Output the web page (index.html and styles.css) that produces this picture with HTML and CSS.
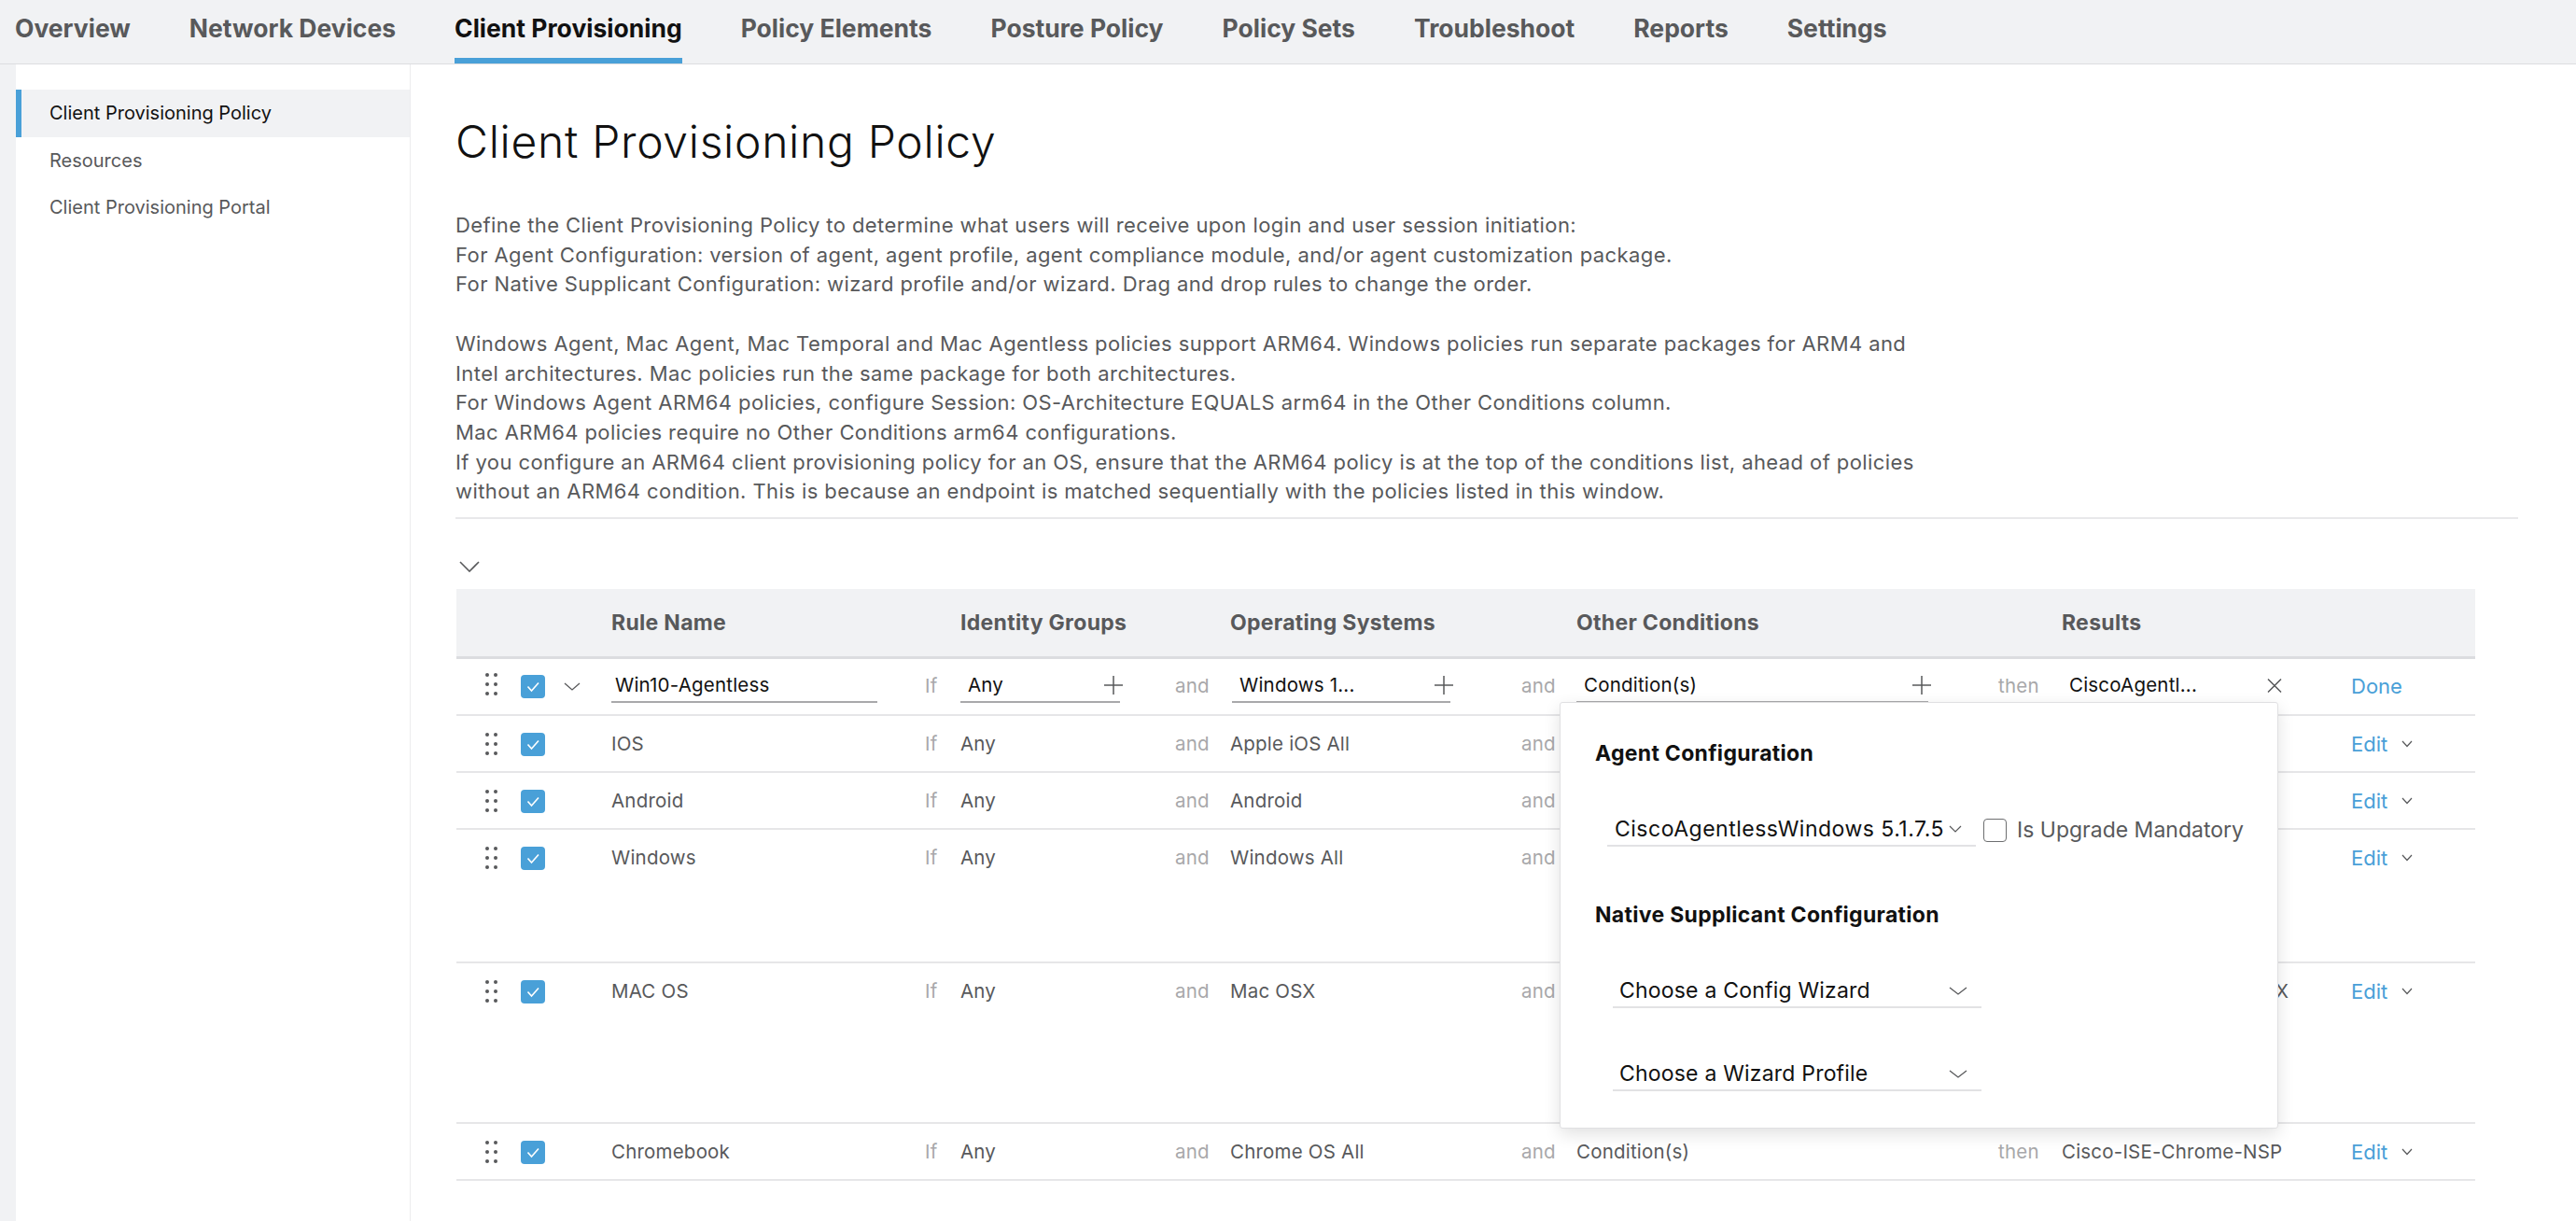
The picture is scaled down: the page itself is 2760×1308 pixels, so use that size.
FILE: index.html
```html
<!DOCTYPE html>
<html lang="en">
<head>
<meta charset="utf-8">
<title>Client Provisioning Policy</title>
<link rel="stylesheet" href="styles.css">
</head>
<body>
<nav class="tabs">
  <a class="tab">Overview</a>
  <a class="tab">Network Devices</a>
  <a class="tab active">Client Provisioning</a>
  <a class="tab">Policy Elements</a>
  <a class="tab">Posture Policy</a>
  <a class="tab">Policy Sets</a>
  <a class="tab">Troubleshoot</a>
  <a class="tab">Reports</a>
  <a class="tab">Settings</a>
</nav>
<div class="page">
  <aside class="sidebar">
    <a class="side-item active">Client Provisioning Policy</a>
    <a class="side-item">Resources</a>
    <a class="side-item">Client Provisioning Portal</a>
  </aside>
  <main class="main">
    <h1 class="title">Client Provisioning Policy</h1>
    <div class="desc">
      <p>Define the Client Provisioning Policy to determine what users will receive upon login and user session initiation:<br>
      For Agent Configuration: version of agent, agent profile, agent compliance module, and/or agent customization package.<br>
      For Native Supplicant Configuration: wizard profile and/or wizard. Drag and drop rules to change the order.</p>
      <p>Windows Agent, Mac Agent, Mac Temporal and Mac Agentless policies support ARM64. Windows policies run separate packages for ARM4 and<br>
      Intel architectures. Mac policies run the same package for both architectures.<br>
      For Windows Agent ARM64 policies, configure Session: OS-Architecture EQUALS arm64 in the Other Conditions column.<br>
      Mac ARM64 policies require no Other Conditions arm64 configurations.<br>
      If you configure an ARM64 client provisioning policy for an OS, ensure that the ARM64 policy is at the top of the conditions list, ahead of policies<br>
      without an ARM64 condition. This is because an endpoint is matched sequentially with the policies listed in this window.</p>
    </div>
    <div class="sep"></div>
    <div class="collapse"><svg width="22" height="12" viewBox="0 0 22 12"><path d="M1 1l10 10 10-10" fill="none" stroke="#58595b" stroke-width="1.6"/></svg></div>

    <div class="table">
      <div class="grid thead">
        <span></span><span></span><span></span>
        <span>Rule Name</span><span></span>
        <span>Identity Groups</span><span></span>
        <span>Operating Systems</span><span></span>
        <span>Other Conditions</span><span></span>
        <span>Results</span><span></span>
      </div>

      <div class="grid row row-edit">
        <span class="drag"><svg width="13" height="24" viewBox="0 0 13 24"><circle cx="2" cy="2" r="2"/><circle cx="11" cy="2" r="2"/><circle cx="2" cy="12" r="2"/><circle cx="11" cy="12" r="2"/><circle cx="2" cy="22" r="2"/><circle cx="11" cy="22" r="2"/></svg></span>
        <span class="cb"><svg width="26" height="25" viewBox="0 0 26 25"><path d="M7.5 12.5l4 4.5 7.5-8.5" fill="none" stroke="#fff" stroke-width="1.6"/></svg></span>
        <span class="expand"><svg width="18" height="9" viewBox="0 0 18 9"><path d="M1 1l8 7 8-7" fill="none" stroke="#58595b" stroke-width="1.3"/></svg></span>
        <span class="input in-name">Win10-Agentless</span>
        <span class="kw">If</span>
        <span class="input in-id">Any<svg class="plus" width="20" height="20" viewBox="0 0 20 20"><path d="M10 0v20M0 10h20" stroke="#58595b" stroke-width="1.5"/></svg></span>
        <span class="kw">and</span>
        <span class="input in-os">Windows 1...<svg class="plus" width="20" height="20" viewBox="0 0 20 20"><path d="M10 0v20M0 10h20" stroke="#58595b" stroke-width="1.5"/></svg></span>
        <span class="kw">and</span>
        <span class="input in-cond">Condition(s)<svg class="plus" width="20" height="20" viewBox="0 0 20 20"><path d="M10 0v20M0 10h20" stroke="#58595b" stroke-width="1.5"/></svg></span>
        <span class="kw">then</span>
        <span class="input in-res">CiscoAgentl...<svg class="x" width="16" height="15" viewBox="0 0 16 15"><path d="M1 0.5l14 14M15 0.5L1 14.5" stroke="#58595b" stroke-width="1.5"/></svg></span>
        <span class="action">Done</span>
      </div>

      <div class="grid row">
        <span class="drag"><svg width="13" height="24" viewBox="0 0 13 24"><circle cx="2" cy="2" r="2"/><circle cx="11" cy="2" r="2"/><circle cx="2" cy="12" r="2"/><circle cx="11" cy="12" r="2"/><circle cx="2" cy="22" r="2"/><circle cx="11" cy="22" r="2"/></svg></span>
        <span class="cb"><svg width="26" height="25" viewBox="0 0 26 25"><path d="M7.5 12.5l4 4.5 7.5-8.5" fill="none" stroke="#fff" stroke-width="1.6"/></svg></span>
        <span></span>
        <span class="txt">IOS</span>
        <span class="kw">If</span>
        <span class="txt">Any</span>
        <span class="kw">and</span>
        <span class="txt">Apple iOS All</span>
        <span class="kw">and</span>
        <span></span>
        <span></span>
        <span></span>
        <span class="action">Edit<svg class="chev" width="12" height="8" viewBox="0 0 12 8"><path d="M1 1l5 5.5 5-5.5" fill="none" stroke="#58595b" stroke-width="1.2"/></svg></span>
      </div>

      <div class="grid row">
        <span class="drag"><svg width="13" height="24" viewBox="0 0 13 24"><circle cx="2" cy="2" r="2"/><circle cx="11" cy="2" r="2"/><circle cx="2" cy="12" r="2"/><circle cx="11" cy="12" r="2"/><circle cx="2" cy="22" r="2"/><circle cx="11" cy="22" r="2"/></svg></span>
        <span class="cb"><svg width="26" height="25" viewBox="0 0 26 25"><path d="M7.5 12.5l4 4.5 7.5-8.5" fill="none" stroke="#fff" stroke-width="1.6"/></svg></span>
        <span></span>
        <span class="txt">Android</span>
        <span class="kw">If</span>
        <span class="txt">Any</span>
        <span class="kw">and</span>
        <span class="txt">Android</span>
        <span class="kw">and</span>
        <span></span>
        <span></span>
        <span></span>
        <span class="action">Edit<svg class="chev" width="12" height="8" viewBox="0 0 12 8"><path d="M1 1l5 5.5 5-5.5" fill="none" stroke="#58595b" stroke-width="1.2"/></svg></span>
      </div>

      <div class="grid row row-win">
        <span class="drag"><svg width="13" height="24" viewBox="0 0 13 24"><circle cx="2" cy="2" r="2"/><circle cx="11" cy="2" r="2"/><circle cx="2" cy="12" r="2"/><circle cx="11" cy="12" r="2"/><circle cx="2" cy="22" r="2"/><circle cx="11" cy="22" r="2"/></svg></span>
        <span class="cb"><svg width="26" height="25" viewBox="0 0 26 25"><path d="M7.5 12.5l4 4.5 7.5-8.5" fill="none" stroke="#fff" stroke-width="1.6"/></svg></span>
        <span></span>
        <span class="txt">Windows</span>
        <span class="kw">If</span>
        <span class="txt">Any</span>
        <span class="kw">and</span>
        <span class="txt">Windows All</span>
        <span class="kw">and</span>
        <span></span>
        <span></span>
        <span></span>
        <span class="action">Edit<svg class="chev" width="12" height="8" viewBox="0 0 12 8"><path d="M1 1l5 5.5 5-5.5" fill="none" stroke="#58595b" stroke-width="1.2"/></svg></span>
      </div>

      <div class="grid row row-mac">
        <span class="drag"><svg width="13" height="24" viewBox="0 0 13 24"><circle cx="2" cy="2" r="2"/><circle cx="11" cy="2" r="2"/><circle cx="2" cy="12" r="2"/><circle cx="11" cy="12" r="2"/><circle cx="2" cy="22" r="2"/><circle cx="11" cy="22" r="2"/></svg></span>
        <span class="cb"><svg width="26" height="25" viewBox="0 0 26 25"><path d="M7.5 12.5l4 4.5 7.5-8.5" fill="none" stroke="#fff" stroke-width="1.6"/></svg></span>
        <span></span>
        <span class="txt">MAC OS</span>
        <span class="kw">If</span>
        <span class="txt">Any</span>
        <span class="kw">and</span>
        <span class="txt">Mac OSX</span>
        <span class="kw">and</span>
        <span></span>
        <span></span>
        <span class="txt">Cisco-ISE-NSP-MacOSX</span>
        <span class="action">Edit<svg class="chev" width="12" height="8" viewBox="0 0 12 8"><path d="M1 1l5 5.5 5-5.5" fill="none" stroke="#58595b" stroke-width="1.2"/></svg></span>
      </div>

      <div class="grid row">
        <span class="drag"><svg width="13" height="24" viewBox="0 0 13 24"><circle cx="2" cy="2" r="2"/><circle cx="11" cy="2" r="2"/><circle cx="2" cy="12" r="2"/><circle cx="11" cy="12" r="2"/><circle cx="2" cy="22" r="2"/><circle cx="11" cy="22" r="2"/></svg></span>
        <span class="cb"><svg width="26" height="25" viewBox="0 0 26 25"><path d="M7.5 12.5l4 4.5 7.5-8.5" fill="none" stroke="#fff" stroke-width="1.6"/></svg></span>
        <span></span>
        <span class="txt">Chromebook</span>
        <span class="kw">If</span>
        <span class="txt">Any</span>
        <span class="kw">and</span>
        <span class="txt">Chrome OS All</span>
        <span class="kw">and</span>
        <span class="txt">Condition(s)</span>
        <span class="kw">then</span>
        <span class="txt">Cisco-ISE-Chrome-NSP</span>
        <span class="action">Edit<svg class="chev" width="12" height="8" viewBox="0 0 12 8"><path d="M1 1l5 5.5 5-5.5" fill="none" stroke="#58595b" stroke-width="1.2"/></svg></span>
      </div>

      <div class="popover">
        <div class="pop-title">Agent Configuration</div>
        <div class="pop-line">
          <div class="select sel-agent"><span>CiscoAgentlessWindows 5.1.7.5</span><svg width="14" height="8" viewBox="0 0 14 8"><path d="M1 1l6 6 6-6" fill="none" stroke="#58595b" stroke-width="1.2"/></svg></div>
          <span class="pop-cb"></span>
          <span class="pop-label">Is Upgrade Mandatory</span>
        </div>
        <div class="pop-title pop-title2">Native Supplicant Configuration</div>
        <div class="select sel-wide sel-a"><span>Choose a Config Wizard</span><svg width="20" height="9" viewBox="0 0 20 9"><path d="M1 1l9 7 9-7" fill="none" stroke="#58595b" stroke-width="1.3"/></svg></div>
        <div class="select sel-wide sel-b"><span>Choose a Wizard Profile</span><svg width="20" height="9" viewBox="0 0 20 9"><path d="M1 1l9 7 9-7" fill="none" stroke="#58595b" stroke-width="1.3"/></svg></div>
      </div>
    </div>
  </main>
</div>
</body>
</html>
```

FILE: styles.css
```css
* { box-sizing: border-box; }

html, body {
  margin: 0;
  padding: 0;
}

body {
  background: #f1f2f4;
  font-family: Inter, "Noto Sans", "Liberation Sans", sans-serif;
  color: #58595b;
}

/* top tabs */
.tabs {
  display: flex;
  gap: 63px;
  height: 69px;
  padding-left: 16px;
  border-bottom: 1px solid #dcdde0;
}

.tab {
  display: flex;
  align-items: center;
  height: 68px;
  padding-bottom: 2px;
  border-bottom: 6px solid transparent;
  font-size: 26.5px;
  font-weight: 700;
  color: #58595b;
  white-space: nowrap;
}

.tab.active {
  color: #111;
  border-bottom-color: #49a0d8;
}

/* page */
.page {
  display: flex;
  margin-left: 17px;
  background: #fff;
  min-height: 1239px;
}

.sidebar {
  width: 423px;
  flex: none;
  padding-top: 27px;
  border-right: 1px solid #ececee;
}

.side-item {
  display: flex;
  align-items: center;
  height: 50px;
  padding-left: 30px;
  padding-bottom: 1px;
  border-left: 6px solid transparent;
  font-size: 20px;
  color: #58595b;
}

.side-item.active {
  height: 51px;
  background: #f1f2f4;
  border-left-color: #49a0d8;
  color: #111;
}

.main {
  flex: 1;
  padding: 55px 62px 0 48px;
}

.title {
  margin: 0;
  font-size: 48px;
  line-height: 56px;
  font-weight: 300;
  letter-spacing: 0.7px;
  color: #111;
}

.desc {
  margin-top: 46px;
  font-size: 22px;
  line-height: 31.7px;
  letter-spacing: 0.42px;
  color: #58595b;
}

.desc p {
  margin: 0;
}

.desc p + p {
  margin-top: 31.7px;
}

.sep {
  margin-top: 11px;
  height: 2px;
  background: #e8e8ea;
}

.collapse {
  margin: 45px 0 0 4px;
  height: 12px;
  line-height: 0;
}

/* table */
.table {
  position: relative;
  margin: 18px 0 0 1px;
  width: 2163px;
}

.grid {
  display: grid;
  grid-template-columns: 38px 46px 51px 336px 38px 230px 59px 312px 59px 452px 68px 310px 133px;
  padding-left: 31px;
}

.thead {
  height: 75px;
  padding-bottom: 1px;
  align-items: center;
  background: #f1f2f4;
  border-bottom: 3px solid #dcdde0;
  font-size: 23px;
  font-weight: 700;
  letter-spacing: 0.3px;
  color: #58595b;
  white-space: nowrap;
}

.row {
  height: 61px;
  padding-top: 15px;
  align-items: start;
  border-bottom: 2px solid #e6e6e8;
  font-size: 20.5px;
  letter-spacing: 0.2px;
  line-height: 30px;
  color: #58595b;
}

.row-win { height: 143px; }
.row-mac { height: 172px; }

.row-edit {
  padding-top: 0;
  padding-bottom: 1px;
  align-items: center;
}

.txt {
  white-space: nowrap;
}

.kw {
  color: #a8a8aa;
}

.drag {
  padding-top: 3px;
  line-height: 0;
}

.drag svg { fill: #58595b; }

.cb {
  display: block;
  width: 26px;
  height: 25px;
  margin-top: 3px;
  border-radius: 4px;
  background: #49a0d8;
  line-height: 0;
}

.row-edit .cb { margin-top: 0; }
.row-edit .drag { padding-top: 0; margin-top: -4px; }

.expand {
  line-height: 0;
}

.input {
  display: flex;
  align-items: center;
  justify-content: space-between;
  height: 36px;
  border-bottom: 2px solid #a9a9ab;
  color: #111;
  white-space: nowrap;
}

.in-name { width: 285px; padding-left: 4px; }
.in-id { width: 171px; padding-left: 8px; }
.in-os { width: 234px; margin-left: 2px; padding-left: 8px; }
.in-cond { width: 377px; padding-left: 8px; }
.in-res { width: 240px; padding-left: 8px; border-bottom-color: transparent; }

.plus { margin-right: -3px; flex: none; }
.x { margin-right: 4px; flex: none; }

.action {
  display: flex;
  align-items: center;
  gap: 15px;
  color: #49a0d8;
  font-size: 22px;
  letter-spacing: 0;
}

/* popover */
.popover {
  position: absolute;
  left: 1182px;
  top: 121px;
  width: 770px;
  height: 457px;
  padding: 39px 0 0 37px;
  background: #fff;
  border: 1px solid #e0e0e2;
  border-radius: 3px;
  box-shadow: 0 6px 18px rgba(0, 0, 0, 0.12);
  z-index: 2;
}

.pop-title {
  font-size: 23px;
  line-height: 30px;
  font-weight: 700;
  letter-spacing: 0.3px;
  color: #111;
}

.pop-title2 {
  margin-top: 58px;
}

.pop-line {
  display: flex;
  align-items: center;
  margin-top: 49px;
}

.select {
  display: flex;
  align-items: center;
  justify-content: space-between;
  height: 36px;
  border-bottom: 2px solid #e2e2e4;
  font-size: 23px;
  letter-spacing: 0.2px;
  color: #111;
  white-space: nowrap;
}

.select svg { flex: none; }

.sel-agent {
  width: 395px;
  margin-left: 13px;
  padding: 0 15px 0 8px;
}

.sel-agent span { letter-spacing: 0.5px; }

.pop-cb {
  width: 25px;
  height: 25px;
  margin-left: 8px;
  border: 1.5px solid #6d6e70;
  border-radius: 4px;
}

.pop-label {
  margin-left: 11px;
  font-size: 23px;
  color: #58595b;
  white-space: nowrap;
}

.sel-wide {
  width: 395px;
  margin-left: 19px;
  padding: 0 15px 0 7px;
}

.sel-a { margin-top: 49px; }
.sel-b { margin-top: 53px; }
```
